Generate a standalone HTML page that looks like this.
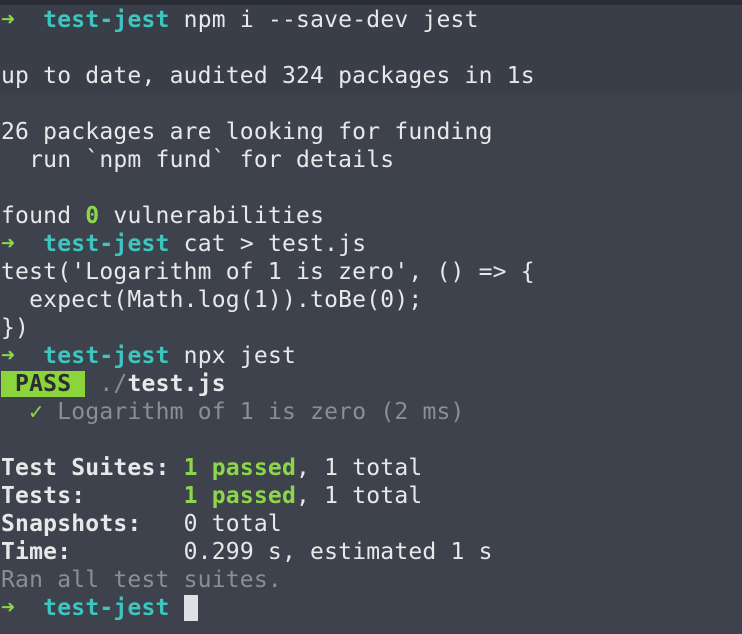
<!DOCTYPE html>
<html><head><meta charset="utf-8"><style>
html,body{margin:0;padding:0}
body{width:742px;height:634px;overflow:hidden;background:#3e424c;position:relative}
.top{position:absolute;left:0;top:0;width:742px;height:5px;background:#2a2d35}
.band{position:absolute;left:0;top:5px;width:742px;height:88px;background:#3a3e48}
pre{position:absolute;left:1px;top:6px;margin:0;font-family:"DejaVu Sans Mono","Liberation Mono",monospace;font-size:23px;line-height:28px;letter-spacing:0.2px;color:#e8e8ea}
.c{color:#3cc6c0;font-weight:bold}
.g{color:#8cd64a}
.gb{color:#8cd64a;font-weight:bold}
.b{font-weight:bold}
.d{color:#8b8e95}
.pass{background:#8bd43c;color:#2b2e30;font-weight:bold}
.cur{background:#dfe0e6}
</style></head><body>
<div class="top"></div><div class="band"></div>
<pre><span class="g">➜</span>  <span class="c">test-jest</span> npm i --save-dev jest

up to date, audited 324 packages in 1s

26 packages are looking for funding
  run `npm fund` for details

found <span class="gb">0</span> vulnerabilities
<span class="g">➜</span>  <span class="c">test-jest</span> cat &gt; test.js
test('Logarithm of 1 is zero', () =&gt; {
  expect(Math.log(1)).toBe(0);
})
<span class="g">➜</span>  <span class="c">test-jest</span> npx jest
<span class="pass"> PASS </span> <span class="d">./</span><span class="b">test.js</span>
  <span class="g">✓</span> <span class="d">Logarithm of 1 is zero (2 ms)</span>

<span class="b">Test Suites: </span><span class="gb">1 passed</span>, 1 total
<span class="b">Tests:       </span><span class="gb">1 passed</span>, 1 total
<span class="b">Snapshots:   </span>0 total
<span class="b">Time:        </span>0.299 s, estimated 1 s
<span class="d">Ran all test suites.</span>
<span class="g">➜</span>  <span class="c">test-jest</span> <span class="cur"> </span></pre>
</body></html>
